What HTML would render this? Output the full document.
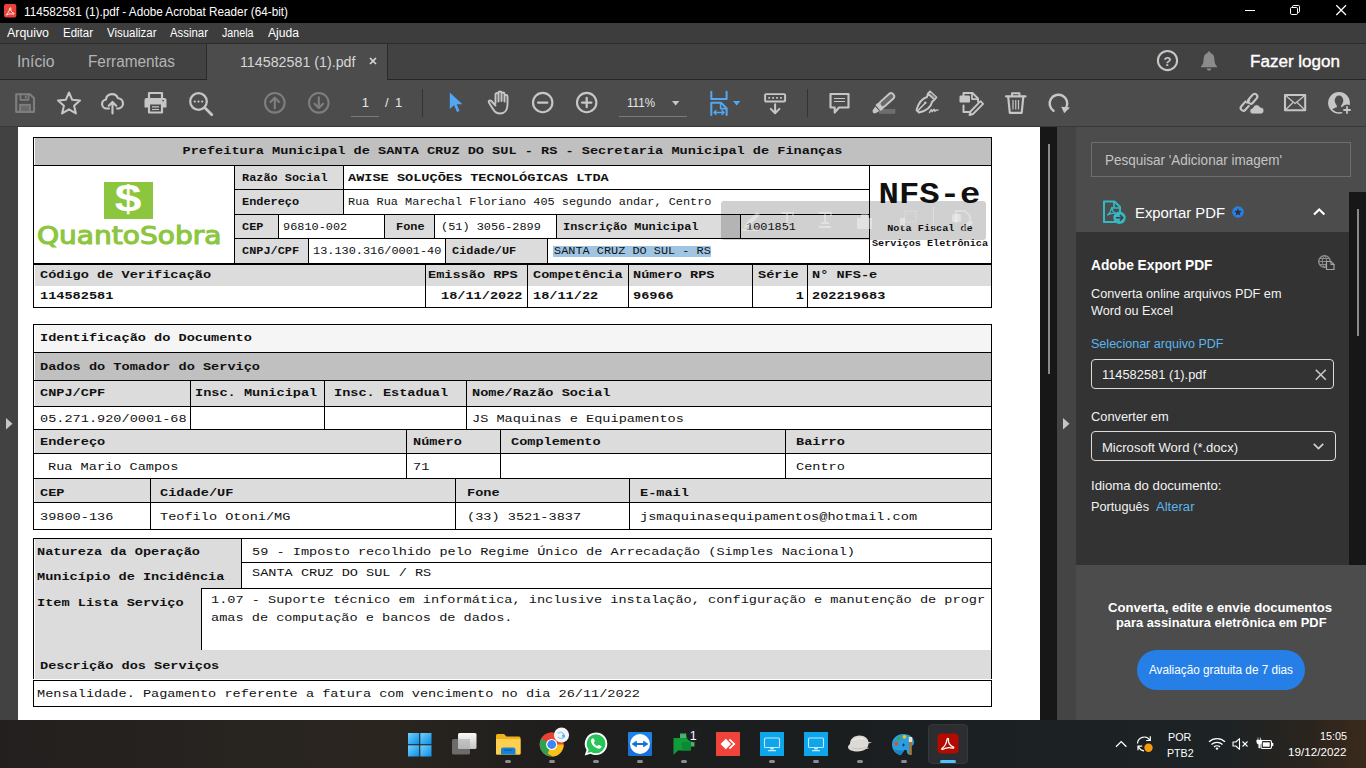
<!DOCTYPE html>
<html lang="pt-BR"><head><meta charset="utf-8"><title>114582581 (1).pdf - Adobe Acrobat Reader (64-bit)</title>
<style>
*{margin:0;padding:0;box-sizing:border-box}
html,body{width:1366px;height:768px;overflow:hidden;background:#1f1d1b}
#r{position:relative;width:1366px;height:768px;overflow:hidden;font-family:"Liberation Sans",sans-serif}
#r div,#r span,#r svg{position:absolute}
.m{font-family:"Liberation Mono",monospace;white-space:pre}
.s{font-family:"Liberation Sans",sans-serif;white-space:pre}
.d{font-family:"DejaVu Sans","Liberation Sans",sans-serif;white-space:pre}
svg{overflow:visible}
</style></head>
<body><div id="r">
<div style="left:0px;top:0px;width:1366px;height:23px;background:#000;"></div>
<div style="left:0px;top:23px;width:1366px;height:20px;background:#3d3d3d;"></div>
<div style="left:0px;top:43px;width:1366px;height:37px;background:#424242;"></div>
<div style="left:0px;top:43px;width:1366px;height:1px;background:#2b2b2b;"></div>
<div style="left:0px;top:79px;width:1366px;height:1px;background:#262626;"></div>
<div style="left:207px;top:44px;width:180px;height:36px;background:#4c4c4c;"></div>
<div style="left:206px;top:44px;width:1px;height:35px;background:#2b2b2b;"></div>
<div style="left:387px;top:44px;width:1px;height:35px;background:#2b2b2b;"></div>
<div style="left:0px;top:80px;width:1366px;height:46px;background:#4c4c4c;"></div>
<span class="s" style="top:6px;font-size:12px;line-height:12px;color:#fff;left:23.5px;transform-origin:0 10px;transform:scale(0.9779,1.0);">114582581 (1).pdf - Adobe Acrobat Reader (64-bit)</span>
<span class="s" style="top:27px;font-size:12px;line-height:12px;color:#fff;left:7px;transform-origin:0 10px;transform:scale(1.0323,1.0);">Arquivo</span>
<span class="s" style="top:27px;font-size:12px;line-height:12px;color:#fff;left:63.3px;transform-origin:0 10px;transform:scale(0.9567,1.0);">Editar</span>
<span class="s" style="top:27px;font-size:12px;line-height:12px;color:#fff;left:107px;transform-origin:0 10px;transform:scale(0.9554,1.0);">Visualizar</span>
<span class="s" style="top:27px;font-size:12px;line-height:12px;color:#fff;left:170px;transform-origin:0 10px;transform:scale(0.9496,1.0);">Assinar</span>
<span class="s" style="top:27px;font-size:12px;line-height:12px;color:#fff;left:222.3px;transform-origin:0 10px;transform:scale(0.8905,1.0);">Janela</span>
<span class="s" style="top:27px;font-size:12px;line-height:12px;color:#fff;left:268px;transform-origin:0 10px;transform:scale(1.0097,1.0);">Ajuda</span>
<span class="s" style="top:54px;font-size:16px;line-height:16px;color:#b4b4b4;left:17px;transform-origin:0 13px;transform:scale(0.9804,1.0);">Início</span>
<span class="s" style="top:54px;font-size:16px;line-height:16px;color:#b4b4b4;left:88px;transform-origin:0 13px;transform:scale(0.9592,1.0);">Ferramentas</span>
<span class="s" style="top:54px;font-size:15px;line-height:15px;color:#d6d6d6;left:239.5px;transform-origin:0 13px;transform:scale(0.9506,1.0);">114582581 (1).pdf</span>
<span class="s" style="top:54px;font-size:16px;line-height:16px;color:#fff;left:1250px;transform-origin:0 13px;transform:scale(1.0651,1.0);-webkit-text-stroke:0.35px #fff;">Fazer logon</span>
<div style="left:0px;top:126px;width:18px;height:594px;background:#424242;"></div>
<div style="left:18px;top:126px;width:1022px;height:594px;background:#fff;"></div>
<div style="left:1040px;top:126px;width:17px;height:594px;background:#171717;"></div>
<div style="left:1048px;top:144px;width:2px;height:230px;background:#8a8a8a;"></div>
<div style="left:1057px;top:126px;width:19px;height:594px;background:#444;"></div>
<div style="left:1076px;top:126px;width:290px;height:594px;background:#4c4c4c;"></div>
<div style="left:1076px;top:232px;width:273px;height:333px;background:#333;"></div>
<div style="left:1349px;top:192px;width:17px;height:373px;background:#171717;"></div>
<div style="left:1357px;top:209px;width:2px;height:127px;background:#8a8a8a;"></div>
<div style="left:0px;top:126px;width:1366px;height:1px;background:#383838;"></div>
<div style="left:35px;top:137px;width:956px;height:28px;background:#c0c0c0;"></div>
<div style="left:234px;top:165px;width:110px;height:24px;background:#dcdcdc;"></div>
<div style="left:234px;top:189px;width:110px;height:25px;background:#dcdcdc;"></div>
<div style="left:234px;top:214px;width:45px;height:24px;background:#dcdcdc;"></div>
<div style="left:234px;top:238px;width:75px;height:25px;background:#dcdcdc;"></div>
<div style="left:385px;top:214px;width:50px;height:24px;background:#dcdcdc;"></div>
<div style="left:556px;top:214px;width:185px;height:24px;background:#dcdcdc;"></div>
<div style="left:446px;top:238px;width:102px;height:25px;background:#dcdcdc;"></div>
<div style="left:35px;top:263px;width:956px;height:23px;background:#dcdcdc;"></div>
<div style="left:33px;top:137px;width:959px;height:1px;background:#000;"></div>
<div style="left:33px;top:165px;width:959px;height:1px;background:#000;"></div>
<div style="left:234px;top:189px;width:636px;height:1px;background:#000;"></div>
<div style="left:234px;top:214px;width:636px;height:1px;background:#000;"></div>
<div style="left:234px;top:238px;width:636px;height:1px;background:#000;"></div>
<div style="left:33px;top:263px;width:959px;height:2px;background:#000;"></div>
<div style="left:33px;top:307px;width:959px;height:1px;background:#000;"></div>
<div style="left:33px;top:137px;width:1px;height:171px;background:#000;"></div>
<div style="left:991px;top:137px;width:1px;height:171px;background:#000;"></div>
<div style="left:234px;top:165px;width:1px;height:98px;background:#000;"></div>
<div style="left:343px;top:165px;width:1px;height:49px;background:#000;"></div>
<div style="left:278px;top:214px;width:1px;height:24px;background:#000;"></div>
<div style="left:384px;top:214px;width:1px;height:24px;background:#000;"></div>
<div style="left:434px;top:214px;width:1px;height:24px;background:#000;"></div>
<div style="left:556px;top:214px;width:1px;height:24px;background:#000;"></div>
<div style="left:740px;top:214px;width:1px;height:24px;background:#000;"></div>
<div style="left:308px;top:238px;width:1px;height:25px;background:#000;"></div>
<div style="left:445px;top:238px;width:1px;height:25px;background:#000;"></div>
<div style="left:547px;top:238px;width:1px;height:25px;background:#000;"></div>
<div style="left:869px;top:165px;width:1px;height:98px;background:#000;"></div>
<div style="left:425px;top:263px;width:1px;height:44px;background:#000;"></div>
<div style="left:527px;top:263px;width:1px;height:44px;background:#000;"></div>
<div style="left:628px;top:263px;width:1px;height:44px;background:#000;"></div>
<div style="left:752px;top:263px;width:1px;height:44px;background:#000;"></div>
<div style="left:807px;top:263px;width:1px;height:44px;background:#000;"></div>
<span class="m" style="top:144px;font-size:13.58px;line-height:13.58px;color:#111;left:512.5px;transform-origin:50% 10px;transform:translateX(-50%) scale(1.0,0.87);font-weight:bold;">Prefeitura Municipal de SANTA CRUZ DO SUL - RS - Secretaria Municipal de Finanças</span>
<span class="m" style="top:173px;font-size:11.88px;line-height:11.88px;color:#111;left:242px;transform-origin:0 8px;transform:scale(1.0,0.87);font-weight:bold;">Razão Social</span>
<span class="m" style="top:171px;font-size:13.58px;line-height:13.58px;color:#111;left:348px;transform-origin:0 10px;transform:scale(1.0,0.87);font-weight:bold;">AWISE SOLUÇÕES TECNOLÓGICAS LTDA</span>
<span class="m" style="top:197px;font-size:11.88px;line-height:11.88px;color:#111;left:242px;transform-origin:0 8px;transform:scale(1.0,0.87);font-weight:bold;">Endereço</span>
<span class="m" style="top:197px;font-size:11.88px;line-height:11.88px;color:#111;left:348px;transform-origin:0 8px;transform:scale(1.0,0.87);">Rua Rua Marechal Floriano 405 segundo andar, Centro</span>
<span class="m" style="top:222px;font-size:11.88px;line-height:11.88px;color:#111;left:242px;transform-origin:0 8px;transform:scale(1.0,0.87);font-weight:bold;">CEP</span>
<span class="m" style="top:222px;font-size:11.88px;line-height:11.88px;color:#111;left:283px;transform-origin:0 8px;transform:scale(1.0,0.87);">96810-002</span>
<span class="m" style="top:222px;font-size:11.88px;line-height:11.88px;color:#111;left:396px;transform-origin:0 8px;transform:scale(1.0,0.87);font-weight:bold;">Fone</span>
<span class="m" style="top:222px;font-size:11.88px;line-height:11.88px;color:#111;left:441px;transform-origin:0 8px;transform:scale(1.0,0.87);">(51) 3056-2899</span>
<span class="m" style="top:222px;font-size:11.88px;line-height:11.88px;color:#111;left:563px;transform-origin:0 8px;transform:scale(1.0,0.87);font-weight:bold;">Inscrição Municipal</span>
<span class="m" style="top:222px;font-size:11.88px;line-height:11.88px;color:#111;left:746px;transform-origin:0 8px;transform:scale(1.0,0.87);">1001851</span>
<span class="m" style="top:246px;font-size:11.88px;line-height:11.88px;color:#111;left:242px;transform-origin:0 8px;transform:scale(1.0,0.87);font-weight:bold;">CNPJ/CPF</span>
<span class="m" style="top:246px;font-size:11.88px;line-height:11.88px;color:#111;left:313px;transform-origin:0 8px;transform:scale(1.0,0.87);">13.130.316/0001-40</span>
<span class="m" style="top:246px;font-size:11.88px;line-height:11.88px;color:#111;left:452px;transform-origin:0 8px;transform:scale(1.0,0.87);font-weight:bold;">Cidade/UF</span>
<div style="left:553px;top:246px;width:158px;height:11px;background:#9fc5e3;"></div>
<span class="m" style="top:246px;font-size:11.88px;line-height:11.88px;color:#111;left:554px;transform-origin:0 8px;transform:scale(1.0,0.87);">SANTA CRUZ DO SUL - RS</span>
<span class="m" style="top:178px;font-size:33.95px;line-height:33.95px;color:#111;left:929.5px;transform-origin:50% 25px;transform:translateX(-50%) scale(1.0,0.87);font-weight:bold;">NFS-e</span>
<span class="m" style="top:224px;font-size:10.19px;line-height:10.19px;color:#111;left:930px;transform-origin:50% 7px;transform:translateX(-50%) scale(1.0,0.87);font-weight:bold;">Nota Fiscal de</span>
<span class="m" style="top:239px;font-size:10.19px;line-height:10.19px;color:#111;left:930px;transform-origin:50% 7px;transform:translateX(-50%) scale(1.0,0.87);font-weight:bold;">Serviços Eletrônica</span>
<span class="m" style="top:268px;font-size:13.58px;line-height:13.58px;color:#111;left:40px;transform-origin:0 10px;transform:scale(1.0,0.87);font-weight:bold;">Código de Verificação</span>
<span class="m" style="top:268px;font-size:13.58px;line-height:13.58px;color:#111;left:428px;transform-origin:0 10px;transform:scale(1.0,0.87);font-weight:bold;">Emissão RPS</span>
<span class="m" style="top:268px;font-size:13.58px;line-height:13.58px;color:#111;left:533px;transform-origin:0 10px;transform:scale(1.0,0.87);font-weight:bold;">Competência</span>
<span class="m" style="top:268px;font-size:13.58px;line-height:13.58px;color:#111;left:633px;transform-origin:0 10px;transform:scale(1.0,0.87);font-weight:bold;">Número RPS</span>
<span class="m" style="top:268px;font-size:13.58px;line-height:13.58px;color:#111;left:758px;transform-origin:0 10px;transform:scale(1.0,0.87);font-weight:bold;">Série</span>
<span class="m" style="top:268px;font-size:13.58px;line-height:13.58px;color:#111;left:812px;transform-origin:0 10px;transform:scale(1.0,0.87);font-weight:bold;">N° NFS-e</span>
<span class="m" style="top:289px;font-size:13.58px;line-height:13.58px;color:#111;left:40px;transform-origin:0 10px;transform:scale(1.0,0.87);font-weight:bold;">114582581</span>
<span class="m" style="top:289px;font-size:13.58px;line-height:13.58px;color:#111;right:843.5px;transform-origin:100% 10px;transform:scale(1.0,0.87);font-weight:bold;">18/11/2022</span>
<span class="m" style="top:289px;font-size:13.58px;line-height:13.58px;color:#111;left:533px;transform-origin:0 10px;transform:scale(1.0,0.87);font-weight:bold;">18/11/22</span>
<span class="m" style="top:289px;font-size:13.58px;line-height:13.58px;color:#111;left:633px;transform-origin:0 10px;transform:scale(1.0,0.87);font-weight:bold;">96966</span>
<span class="m" style="top:289px;font-size:13.58px;line-height:13.58px;color:#111;right:562px;transform-origin:100% 10px;transform:scale(1.0,0.87);font-weight:bold;">1</span>
<span class="m" style="top:289px;font-size:13.58px;line-height:13.58px;color:#111;left:812px;transform-origin:0 10px;transform:scale(1.0,0.87);font-weight:bold;">202219683</span>
<div style="left:721px;top:201px;width:265px;height:39px;background:rgba(20,20,20,0.2);border-radius:3px;"></div>
<div style="left:35px;top:324px;width:956px;height:28px;background:#f5f5f5;"></div>
<div style="left:35px;top:352px;width:956px;height:28px;background:#c0c0c0;"></div>
<div style="left:35px;top:380px;width:956px;height:26px;background:#dcdcdc;"></div>
<div style="left:35px;top:429px;width:956px;height:24px;background:#dcdcdc;"></div>
<div style="left:35px;top:478px;width:956px;height:24px;background:#dcdcdc;"></div>
<div style="left:33px;top:324px;width:959px;height:1px;background:#000;"></div>
<div style="left:33px;top:352px;width:959px;height:1px;background:#000;"></div>
<div style="left:33px;top:380px;width:959px;height:1px;background:#000;"></div>
<div style="left:33px;top:406px;width:959px;height:1px;background:#000;"></div>
<div style="left:33px;top:429px;width:959px;height:1px;background:#000;"></div>
<div style="left:33px;top:453px;width:959px;height:1px;background:#000;"></div>
<div style="left:33px;top:478px;width:959px;height:1px;background:#000;"></div>
<div style="left:33px;top:502px;width:959px;height:1px;background:#000;"></div>
<div style="left:33px;top:529px;width:959px;height:1px;background:#000;"></div>
<div style="left:33px;top:324px;width:1px;height:206px;background:#000;"></div>
<div style="left:991px;top:324px;width:1px;height:206px;background:#000;"></div>
<div style="left:190px;top:380px;width:1px;height:49px;background:#000;"></div>
<div style="left:324px;top:380px;width:1px;height:49px;background:#000;"></div>
<div style="left:466px;top:380px;width:1px;height:49px;background:#000;"></div>
<div style="left:406px;top:429px;width:1px;height:49px;background:#000;"></div>
<div style="left:500px;top:429px;width:1px;height:49px;background:#000;"></div>
<div style="left:785px;top:429px;width:1px;height:49px;background:#000;"></div>
<div style="left:150px;top:478px;width:1px;height:51px;background:#000;"></div>
<div style="left:455px;top:478px;width:1px;height:51px;background:#000;"></div>
<div style="left:629px;top:478px;width:1px;height:51px;background:#000;"></div>
<span class="m" style="top:331px;font-size:13.58px;line-height:13.58px;color:#111;left:40px;transform-origin:0 10px;transform:scale(1.0,0.87);font-weight:bold;">Identificação do Documento</span>
<span class="m" style="top:360px;font-size:13.58px;line-height:13.58px;color:#111;left:40px;transform-origin:0 10px;transform:scale(1.0,0.87);font-weight:bold;">Dados do Tomador do Serviço</span>
<span class="m" style="top:386px;font-size:13.58px;line-height:13.58px;color:#111;left:40px;transform-origin:0 10px;transform:scale(1.0,0.87);font-weight:bold;">CNPJ/CPF</span>
<span class="m" style="top:386px;font-size:13.58px;line-height:13.58px;color:#111;left:195px;transform-origin:0 10px;transform:scale(1.0,0.87);font-weight:bold;">Insc. Municipal</span>
<span class="m" style="top:386px;font-size:13.58px;line-height:13.58px;color:#111;left:334px;transform-origin:0 10px;transform:scale(1.0,0.87);font-weight:bold;">Insc. Estadual</span>
<span class="m" style="top:386px;font-size:13.58px;line-height:13.58px;color:#111;left:472px;transform-origin:0 10px;transform:scale(1.0,0.87);font-weight:bold;">Nome/Razão Social</span>
<span class="m" style="top:412px;font-size:13.58px;line-height:13.58px;color:#111;left:40px;transform-origin:0 10px;transform:scale(1.0,0.87);">05.271.920/0001-68</span>
<span class="m" style="top:412px;font-size:13.58px;line-height:13.58px;color:#111;left:472px;transform-origin:0 10px;transform:scale(1.0,0.87);">JS Maquinas e Equipamentos</span>
<span class="m" style="top:435px;font-size:13.58px;line-height:13.58px;color:#111;left:40px;transform-origin:0 10px;transform:scale(1.0,0.87);font-weight:bold;">Endereço</span>
<span class="m" style="top:435px;font-size:13.58px;line-height:13.58px;color:#111;left:413px;transform-origin:0 10px;transform:scale(1.0,0.87);font-weight:bold;">Número</span>
<span class="m" style="top:435px;font-size:13.58px;line-height:13.58px;color:#111;left:511px;transform-origin:0 10px;transform:scale(1.0,0.87);font-weight:bold;">Complemento</span>
<span class="m" style="top:435px;font-size:13.58px;line-height:13.58px;color:#111;left:796px;transform-origin:0 10px;transform:scale(1.0,0.87);font-weight:bold;">Bairro</span>
<span class="m" style="top:460px;font-size:13.58px;line-height:13.58px;color:#111;left:48px;transform-origin:0 10px;transform:scale(1.0,0.87);">Rua Mario Campos</span>
<span class="m" style="top:460px;font-size:13.58px;line-height:13.58px;color:#111;left:413px;transform-origin:0 10px;transform:scale(1.0,0.87);">71</span>
<span class="m" style="top:460px;font-size:13.58px;line-height:13.58px;color:#111;left:796px;transform-origin:0 10px;transform:scale(1.0,0.87);">Centro</span>
<span class="m" style="top:486px;font-size:13.58px;line-height:13.58px;color:#111;left:40px;transform-origin:0 10px;transform:scale(1.0,0.87);font-weight:bold;">CEP</span>
<span class="m" style="top:486px;font-size:13.58px;line-height:13.58px;color:#111;left:160px;transform-origin:0 10px;transform:scale(1.0,0.87);font-weight:bold;">Cidade/UF</span>
<span class="m" style="top:486px;font-size:13.58px;line-height:13.58px;color:#111;left:467px;transform-origin:0 10px;transform:scale(1.0,0.87);font-weight:bold;">Fone</span>
<span class="m" style="top:486px;font-size:13.58px;line-height:13.58px;color:#111;left:640px;transform-origin:0 10px;transform:scale(1.0,0.87);font-weight:bold;">E-mail</span>
<span class="m" style="top:510px;font-size:13.58px;line-height:13.58px;color:#111;left:40px;transform-origin:0 10px;transform:scale(1.0,0.87);">39800-136</span>
<span class="m" style="top:510px;font-size:13.58px;line-height:13.58px;color:#111;left:160px;transform-origin:0 10px;transform:scale(1.0,0.87);">Teofilo Otoni/MG</span>
<span class="m" style="top:510px;font-size:13.58px;line-height:13.58px;color:#111;left:467px;transform-origin:0 10px;transform:scale(1.0,0.87);">(33) 3521-3837</span>
<span class="m" style="top:510px;font-size:13.58px;line-height:13.58px;color:#111;left:640px;transform-origin:0 10px;transform:scale(1.0,0.87);">jsmaquinasequipamentos@hotmail.com</span>
<div style="left:35px;top:539px;width:956px;height:140px;background:#dcdcdc;"></div>
<div style="left:242px;top:539px;width:749px;height:49px;background:#fff;"></div>
<div style="left:202px;top:588px;width:789px;height:62px;background:#fff;"></div>
<div style="left:33px;top:538px;width:959px;height:1px;background:#000;"></div>
<div style="left:241px;top:562px;width:751px;height:1px;background:#000;"></div>
<div style="left:201px;top:588px;width:791px;height:1px;background:#000;"></div>
<div style="left:33px;top:538px;width:1px;height:141px;background:#000;"></div>
<div style="left:991px;top:538px;width:1px;height:141px;background:#000;"></div>
<div style="left:241px;top:538px;width:1px;height:51px;background:#000;"></div>
<div style="left:201px;top:588px;width:1px;height:62px;background:#000;"></div>
<span class="m" style="top:545px;font-size:13.58px;line-height:13.58px;color:#111;left:37px;transform-origin:0 10px;transform:scale(1.0,0.87);font-weight:bold;">Natureza da Operação</span>
<span class="m" style="top:545px;font-size:13.58px;line-height:13.58px;color:#111;left:252px;transform-origin:0 10px;transform:scale(1.0,0.87);">59 - Imposto recolhido pelo Regime Único de Arrecadação (Simples Nacional)</span>
<span class="m" style="top:570px;font-size:13.58px;line-height:13.58px;color:#111;left:37px;transform-origin:0 10px;transform:scale(1.0,0.87);font-weight:bold;">Município de Incidência</span>
<span class="m" style="top:566px;font-size:13.58px;line-height:13.58px;color:#111;left:252px;transform-origin:0 10px;transform:scale(1.0,0.87);">SANTA CRUZ DO SUL / RS</span>
<span class="m" style="top:596px;font-size:13.58px;line-height:13.58px;color:#111;left:37px;transform-origin:0 10px;transform:scale(1.0,0.87);font-weight:bold;">Item Lista Serviço</span>
<span class="m" style="top:593px;font-size:13.58px;line-height:13.58px;color:#111;left:211px;transform-origin:0 10px;transform:scale(1.0,0.87);">1.07 - Suporte técnico em informática, inclusive instalação, configuração e manutenção de progr</span>
<span class="m" style="top:611px;font-size:13.58px;line-height:13.58px;color:#111;left:211px;transform-origin:0 10px;transform:scale(1.0,0.87);">amas de computação e bancos de dados.</span>
<span class="m" style="top:659px;font-size:13.58px;line-height:13.58px;color:#111;left:40px;transform-origin:0 10px;transform:scale(1.0,0.87);font-weight:bold;">Descrição dos Serviços</span>
<div style="left:33px;top:680px;width:959px;height:1px;background:#000;"></div>
<div style="left:33px;top:706px;width:959px;height:1px;background:#000;"></div>
<div style="left:33px;top:680px;width:1px;height:27px;background:#000;"></div>
<div style="left:991px;top:680px;width:1px;height:27px;background:#000;"></div>
<span class="m" style="top:687px;font-size:13.58px;line-height:13.58px;color:#111;left:37px;transform-origin:0 10px;transform:scale(1.0,0.87);">Mensalidade. Pagamento referente a fatura com vencimento no dia 26/11/2022</span>
<div style="left:1091px;top:142px;width:260px;height:35px;background:transparent;border:1px solid #6e6e6e;"></div>
<span class="s" style="top:153px;font-size:14px;line-height:14px;color:#c4c4c4;left:1105px;transform-origin:0 12px;transform:scale(0.9643,1.0);">Pesquisar &#x27;Adicionar imagem&#x27;</span>
<span class="s" style="top:205px;font-size:15.5px;line-height:15.5px;color:#fff;left:1135px;transform-origin:0 13px;transform:scale(0.9586,1.0);">Exportar PDF</span>
<span class="s" style="top:258px;font-size:14px;line-height:14px;color:#fff;left:1091px;transform-origin:0 12px;transform:scale(0.9824,1.0);font-weight:bold;">Adobe Export PDF</span>
<span class="s" style="top:288px;font-size:12.5px;line-height:12.5px;color:#f2f2f2;left:1091px;transform-origin:0 10px;transform:scale(1.0155,1.0);">Converta online arquivos PDF em</span>
<span class="s" style="top:305px;font-size:12.5px;line-height:12.5px;color:#f2f2f2;left:1091px;transform-origin:0 10px;transform:scale(1.0116,1.0);">Word ou Excel</span>
<span class="s" style="top:338px;font-size:12.5px;line-height:12.5px;color:#5cb5ec;left:1091px;transform-origin:0 10px;transform:scale(1.0037,1.0);">Selecionar arquivo PDF</span>
<div style="left:1091px;top:359px;width:243px;height:30px;background:transparent;border:1px solid #dcdcdc;border-radius:4px;"></div>
<span class="s" style="top:369px;font-size:12.5px;line-height:12.5px;color:#f2f2f2;left:1101.5px;transform-origin:0 10px;transform:scale(1.0272,1.0);">114582581 (1).pdf</span>
<span class="s" style="top:411px;font-size:12.5px;line-height:12.5px;color:#f2f2f2;left:1091px;transform-origin:0 10px;transform:scale(1.026,1.0);">Converter em</span>
<div style="left:1091px;top:431px;width:245px;height:30px;background:transparent;border:1px solid #dcdcdc;border-radius:4px;"></div>
<span class="s" style="top:442px;font-size:12.5px;line-height:12.5px;color:#f2f2f2;left:1101.5px;transform-origin:0 10px;transform:scale(1.0433,1.0);">Microsoft Word (*.docx)</span>
<span class="s" style="top:480px;font-size:12.5px;line-height:12.5px;color:#f2f2f2;left:1091px;transform-origin:0 10px;transform:scale(1.0549,1.0);">Idioma do documento:</span>
<span class="s" style="top:501px;font-size:12.5px;line-height:12.5px;color:#f2f2f2;left:1091px;transform-origin:0 10px;transform:scale(1.0178,1.0);">Português</span>
<span class="s" style="top:501px;font-size:12.5px;line-height:12.5px;color:#5cb5ec;left:1156px;transform-origin:0 10px;transform:scale(1.0454,1.0);">Alterar</span>
<span class="s" style="top:601px;font-size:13px;line-height:13px;color:#fff;left:1107.5px;transform-origin:0 11px;transform:scale(1.0067,1.0);font-weight:bold;">Converta, edite e envie documentos</span>
<span class="s" style="top:616px;font-size:13px;line-height:13px;color:#fff;left:1116px;transform-origin:0 11px;transform:scale(0.9875,1.0);font-weight:bold;">para assinatura eletrônica em PDF</span>
<div style="left:1137px;top:650px;width:168px;height:40px;background:#257fe7;border-radius:20px;"></div>
<span class="s" style="top:664px;font-size:12.5px;line-height:12.5px;color:#fff;left:1149.3px;transform-origin:0 10px;transform:scale(0.939,1.0);">Avaliação gratuita de 7 dias</span>
<div style="left:0px;top:720px;width:1366px;height:48px;background:linear-gradient(90deg,#231f1e 0%,#282420 18%,#2a251f 28%,#1f1e1d 40%,#1b1d1e 55%,#1b2022 72%,#1d2324 90%,#2b241e 96%,#3a2a1c 100%);"></div>
<span class="s" style="top:732px;font-size:11.5px;line-height:11.5px;color:#fff;left:1168px;transform-origin:0 9px;transform:scale(0.9349,1.0);">POR</span>
<span class="s" style="top:748px;font-size:11.5px;line-height:11.5px;color:#fff;left:1166.6px;transform-origin:0 9px;transform:scale(0.9247,1.0);">PTB2</span>
<span class="s" style="top:731px;font-size:11.5px;line-height:11.5px;color:#fff;left:1319.7px;transform-origin:0 9px;transform:scale(0.9381,1.0);">15:05</span>
<span class="s" style="top:747px;font-size:11.5px;line-height:11.5px;color:#fff;left:1288.3px;transform-origin:0 9px;transform:scale(1.0145,1.0);">19/12/2022</span>
<svg style="left:4px;top:4px;" width="12" height="14" viewBox="0 0 12 14"><rect x="0" y="0" width="12.3" height="13.5" rx="2" fill="#e8423a"/><path d="M2.600 10.300c1.400-1.100 2.700-3.400 3.200-5.900.2-1.100 1.200-.9 1 .2-.4 1.800.9 4.100 2.900 4.600.9.300.5 1.200-.4.900-2-.5-4.500-.4-6.300.8-.7.400-1.100-.2-.4-.6z" fill="none" stroke="#fff" stroke-width="0.9"/></svg>
<div style="left:1245px;top:10px;width:10px;height:1px;background:#fff;"></div>
<svg style="left:1290px;top:5px;" width="10" height="10" viewBox="0 0 10 10"><rect x="0.500" y="2.500" width="7" height="7" rx="1.200" fill="none" stroke="#fff" stroke-width="1"/><path d="M2.500 2.300v-.6a1.200 1.200 0 0 1 1.200-1.200h4.600a1.200 1.200 0 0 1 1.200 1.200v4.600a1.200 1.200 0 0 1-1.200 1.200h-.6" fill="none" stroke="#fff" stroke-width="1"/></svg>
<svg style="left:1336px;top:5px;" width="10" height="10" viewBox="0 0 10 10"><path d="M0.300 0.300l9.700 9.700M10 0.300l-9.700 9.700" stroke="#fff" stroke-width="1.250" fill="none"/></svg>
<svg style="left:369px;top:57px;" width="8" height="8" viewBox="0 0 8 8"><path d="M1 1l6 6M7 1l-6 6" stroke="#d6d6d6" stroke-width="1.700" fill="none"/></svg>
<svg style="left:1157px;top:50px;" width="22" height="22" viewBox="0 0 22 22"><circle cx="10.500" cy="10.500" r="9.600" fill="none" stroke="#c6c6c6" stroke-width="2.05" stroke-linejoin="round" stroke-linecap="round"/></svg>
<span class="s" style="top:55px;font-size:13px;line-height:13px;color:#c6c6c6;left:1167.6px;transform:translateX(-50%);font-weight:bold;">?</span>
<svg style="left:1200px;top:51px;" width="18" height="21" viewBox="0 0 18 21"><path d="M9 0.500c1 0 1.500.7 1.500 1.600 2.800.9 3.900 3.200 3.900 6.300 0 3.600 1.200 5.400 2.600 6.800v1h-16v-1c1.400-1.400 2.600-3.200 2.600-6.800 0-3.100 1.100-5.400 3.900-6.300 0-.9.500-1.600 1.500-1.600zM6.800 17.600h4.400c0 1.300-1 2.200-2.200 2.200s-2.200-.9-2.200-2.200z" fill="#8c8c8c"/></svg>
<svg style="left:15px;top:93px;" width="21" height="21" viewBox="0 0 21 21"><path d="M1.200 1.200h13.800l4 4v13.600h-17.800z" fill="none" stroke="#7e7e7e" stroke-width="2.15" stroke-linejoin="round" stroke-linecap="round"/><path d="M5.500 1.200v5.600h8v-5.600" fill="none" stroke="#7e7e7e" stroke-width="1.85" stroke-linejoin="round" stroke-linecap="round"/><rect x="9.800" y="2.500" width="1.800" height="3" fill="#7e7e7e"/><rect x="5" y="11.800" width="10" height="7" fill="#6a6a6a" stroke="#7e7e7e" stroke-width="1.800"/></svg>
<svg style="left:57px;top:91px;" width="24" height="24" viewBox="0 0 24 24"><path d="M12 1.500l3.200 7.300 7.800.7-5.900 5.200 1.800 7.700-6.900-4.100-6.900 4.100 1.800-7.700-5.900-5.200 7.800-.7z" fill="none" stroke="#c6c6c6" stroke-width="2.05" stroke-linejoin="round" stroke-linecap="round" stroke-linejoin="miter"/></svg>
<svg style="left:101px;top:93px;" width="24" height="22" viewBox="0 0 24 22"><path d="M8 15.500h-2.500a4.500 4.500 0 0 1-.6-8.950 6.200 6.200 0 0 1 12-1.300 5.200 5.200 0 0 1 1.100 10.250h-2" fill="none" stroke="#c6c6c6" stroke-width="2.15" stroke-linejoin="round" stroke-linecap="round"/><path d="M11.500 20.500v-11M7.800 12.800l3.700-3.800 3.700 3.800" fill="none" stroke="#c6c6c6" stroke-width="2.15" stroke-linejoin="round" stroke-linecap="round"/></svg>
<svg style="left:144px;top:92px;" width="23" height="22" viewBox="0 0 23 22"><rect x="5" y="1" width="13" height="6" fill="none" stroke="#c6c6c6" stroke-width="2.15" stroke-linejoin="round" stroke-linecap="round"/><path d="M2.500 6h18a2 2 0 0 1 2 2v7.500h-4.500v-4h-13v4h-4.500v-7.500a2 2 0 0 1 2-2z" fill="#c6c6c6"/><rect x="5" y="11.500" width="13" height="9" fill="none" stroke="#c6c6c6" stroke-width="2.15" stroke-linejoin="round" stroke-linecap="round"/><path d="M8 14.800h7M8 17.500h7" stroke="#c6c6c6" stroke-width="1.200"/><rect x="18.300" y="8" width="1.600" height="1.300" fill="#4c4c4c"/></svg>
<svg style="left:189px;top:92px;" width="24" height="24" viewBox="0 0 24 24"><circle cx="9.500" cy="9.500" r="8.300" fill="none" stroke="#c6c6c6" stroke-width="2.25" stroke-linejoin="round" stroke-linecap="round"/><path d="M15.800 15.800l7 7" fill="none" stroke="#c6c6c6" stroke-width="2.75" stroke-linejoin="round" stroke-linecap="round"/><circle cx="5.800" cy="9.600" r="1.100" fill="#c6c6c6"/><circle cx="9.500" cy="9.600" r="1.100" fill="#c6c6c6"/><circle cx="13.200" cy="9.600" r="1.100" fill="#c6c6c6"/></svg>
<svg style="left:264px;top:92px;" width="22" height="22" viewBox="0 0 22 22"><circle cx="10.800" cy="10.800" r="9.800" fill="none" stroke="#7e7e7e" stroke-width="2.05" stroke-linejoin="round" stroke-linecap="round"/><path d="M10.800 16.500v-10.500M6.500 10l4.300-4.300 4.300 4.300" fill="none" stroke="#7e7e7e" stroke-width="2.15" stroke-linejoin="round" stroke-linecap="round"/></svg>
<svg style="left:308px;top:92px;" width="22" height="22" viewBox="0 0 22 22"><circle cx="10.800" cy="10.800" r="9.800" fill="none" stroke="#7e7e7e" stroke-width="2.05" stroke-linejoin="round" stroke-linecap="round"/><path d="M10.800 5.200v10.500M6.500 11.700l4.300 4.300 4.300-4.300" fill="none" stroke="#7e7e7e" stroke-width="2.15" stroke-linejoin="round" stroke-linecap="round"/></svg>
<span class="s" style="top:96px;font-size:13px;line-height:13px;color:#e6e6e6;left:365.3px;transform:translateX(-50%);">1</span>
<span class="s" style="top:96px;font-size:13px;line-height:13px;color:#e6e6e6;left:385px;">/</span>
<span class="s" style="top:96px;font-size:13px;line-height:13px;color:#e6e6e6;left:398.7px;transform:translateX(-50%);">1</span>
<div style="left:351px;top:116px;width:28px;height:1px;background:#7a7a7a;"></div>
<div style="left:422px;top:89px;width:1px;height:28px;background:#333;"></div>
<svg style="left:449px;top:92px;" width="14" height="21" viewBox="0 0 14 21"><path d="M0.800 0.500v16.500l4.300-3.800 2.900 6.800 2.600-1.100-2.900-6.700h5.700z" fill="#52a7f2"/></svg>
<svg style="left:487px;top:91px;" width="24" height="24" viewBox="0 0 24 24"><path d="M8.500 12v-8.500a1.500 1.500 0 0 1 3 0v7m0-.5v-8a1.500 1.500 0 0 1 3 0v8m0 0v-7a1.500 1.500 0 0 1 3 0v7.500m0-.5v-4.500a1.500 1.500 0 0 1 3 0v8c0 5.500-3 9-7.500 9-3.500 0-5.300-1.500-7.200-4.800l-3.900-6.200c-.9-1.600 1.200-2.800 2.400-1.500l4.200 4.500" fill="none" stroke="#c6c6c6" stroke-width="1.95" stroke-linejoin="round" stroke-linecap="round"/></svg>
<svg style="left:532px;top:92px;" width="22" height="22" viewBox="0 0 22 22"><circle cx="10.700" cy="10.500" r="9.700" fill="none" stroke="#c6c6c6" stroke-width="2.15" stroke-linejoin="round" stroke-linecap="round"/><path d="M6 10.500h9.400" fill="none" stroke="#c6c6c6" stroke-width="2.25" stroke-linejoin="round" stroke-linecap="round"/></svg>
<svg style="left:576px;top:92px;" width="22" height="22" viewBox="0 0 22 22"><circle cx="10.700" cy="10.500" r="9.700" fill="none" stroke="#c6c6c6" stroke-width="2.15" stroke-linejoin="round" stroke-linecap="round"/><path d="M6 10.500h9.400M10.700 5.800v9.400" fill="none" stroke="#c6c6c6" stroke-width="2.25" stroke-linejoin="round" stroke-linecap="round"/></svg>
<span class="s" style="top:96px;font-size:13px;line-height:13px;color:#e6e6e6;left:627.3px;transform-origin:0 11px;transform:scale(0.8938,1.0);">111%</span>
<div style="left:619px;top:116px;width:68px;height:1px;background:#7a7a7a;"></div>
<svg style="left:672px;top:101px;" width="8" height="5" viewBox="0 0 8 5"><path d="M0 0h7.400l-3.700 4.400z" fill="#c6c6c6"/></svg>
<svg style="left:709.5px;top:90.5px;" width="19" height="26" viewBox="0 0 19 26"><path d="M1.300 0.800v7.200h15.300v-7.200" fill="none" stroke="#52a7f2" stroke-width="2.05" stroke-linejoin="round" stroke-linecap="round" stroke-linecap="butt" stroke-linejoin="miter"/><path d="M1.300 23.900v-12.200h9.700l5.600 5.600v6.600" fill="none" stroke="#52a7f2" stroke-width="2.05" stroke-linejoin="round" stroke-linecap="round" stroke-linecap="butt" stroke-linejoin="miter"/><path d="M10.600 12v5.600h5.600" fill="none" stroke="#52a7f2" stroke-width="1.55" stroke-linejoin="round" stroke-linecap="round"/><path d="M4 21.500h10M6 19.500l-2.100 2 2.100 2M12 19.500l2.100 2-2.100 2" fill="none" stroke="#52a7f2" stroke-width="1.35" stroke-linejoin="round" stroke-linecap="round"/></svg>
<svg style="left:733px;top:101px;" width="8" height="5" viewBox="0 0 8 5"><path d="M0 0h7.400l-3.700 4.400z" fill="#52a7f2"/></svg>
<svg style="left:764px;top:93px;" width="23" height="22" viewBox="0 0 23 22"><rect x="1.100" y="1.100" width="20" height="7.400" rx="1" fill="none" stroke="#c6c6c6" stroke-width="1.95" stroke-linejoin="round" stroke-linecap="round"/><path d="M4.300 4.800h1.800M8.200 4.800h1.800M12.100 4.800h1.800M16 4.800h1.800" stroke="#c6c6c6" stroke-width="1.700"/><path d="M11.100 11.300v8.700M6.800 15.900l4.300 4.300 4.300-4.300" fill="none" stroke="#c6c6c6" stroke-width="2.05" stroke-linejoin="round" stroke-linecap="round"/></svg>
<div style="left:807px;top:89px;width:1px;height:28px;background:#333;"></div>
<svg style="left:829px;top:93px;" width="22" height="22" viewBox="0 0 22 22"><path d="M1.500 1h18v13.500h-9.500l-4.300 5v-5h-4.200z" fill="none" stroke="#c6c6c6" stroke-width="2.15" stroke-linejoin="round" stroke-linecap="round"/><path d="M5 5.500h11M5 8.500h11" stroke="#c6c6c6" stroke-width="1"/></svg>
<svg style="left:872px;top:92px;" width="24" height="22" viewBox="0 0 24 22"><rect x="7" y="17" width="16.300" height="4.800" fill="#6e6e6e"/><g transform="translate(11.500,11.200) rotate(48)"><rect x="-3.100" y="-13.300" width="6.200" height="17.500" rx="3.100" fill="#6a6a6a" stroke="#c6c6c6" stroke-width="1.900"/><rect x="-4" y="3.300" width="8" height="4" fill="#c6c6c6"/><path d="M-3 8.300h6l-1 4.700-2 1.200-2-1.200z" fill="#c6c6c6"/></g></svg>
<svg style="left:915px;top:91px;" width="25" height="23" viewBox="0 0 25 23"><path d="M13 2.500l6.500 6-2.500 2.500c-1 5-4 8.500-13 10.500l-2.500-2.500c2-7 5.500-11.500 10.500-13z" fill="none" stroke="#c6c6c6" stroke-width="1.95" stroke-linejoin="round" stroke-linecap="round"/><path d="M13.500 2l1.500-1.700 6.500 6.200-1.800 1.800" fill="none" stroke="#c6c6c6" stroke-width="1.75" stroke-linejoin="round" stroke-linecap="round"/><path d="M16 1.500l5 4.800-2.700.7z" fill="#8a8a8a"/><path d="M2.500 20l7.500-7.800" fill="none" stroke="#c6c6c6" stroke-width="1.65" stroke-linejoin="round" stroke-linecap="round"/><circle cx="10.300" cy="11.800" r="1.300" fill="#c6c6c6"/><path d="M14.500 21.500c1-2 1.800-3.500 2.300-2.500s-.5 2.500.7 1.200 1.500-2.500 2-1.500-.2 2 .8 1.200 1.500-1.500 2.700-.8" fill="none" stroke="#c6c6c6" stroke-width="1.45" stroke-linejoin="round" stroke-linecap="round"/></svg>
<svg style="left:959px;top:92px;" width="25" height="24" viewBox="0 0 25 24"><path d="M4.500 4v-3h9l5.500 5.500v3" fill="none" stroke="#c6c6c6" stroke-width="1.95" stroke-linejoin="round" stroke-linecap="round"/><path d="M13 1.200v5.800h5.800" fill="none" stroke="#c6c6c6" stroke-width="1.75" stroke-linejoin="round" stroke-linecap="round"/><rect x="0.500" y="3.500" width="10.500" height="7" rx="1.200" fill="#c6c6c6"/><path d="M4.500 13.500v6.500h6" fill="none" stroke="#c6c6c6" stroke-width="1.95" stroke-linejoin="round" stroke-linecap="round"/><path d="M11.500 19.500l10-10.300 2.600 2.600-10.100 10.200-3.500 1z" fill="none" stroke="#c6c6c6" stroke-width="1.85" stroke-linejoin="round" stroke-linecap="round"/><path d="M11.300 20l2.400 2.300-3.400 1.100z" fill="#c6c6c6"/></svg>
<svg style="left:1005px;top:92px;" width="22" height="22" viewBox="0 0 22 22"><path d="M1 4.300h19.500" fill="none" stroke="#c6c6c6" stroke-width="2.25" stroke-linejoin="round" stroke-linecap="round"/><path d="M7 4v-2.800h7.500v2.800" fill="none" stroke="#c6c6c6" stroke-width="1.95" stroke-linejoin="round" stroke-linecap="round"/><path d="M3.200 4.800l1.600 16h11.900l1.600-16" fill="none" stroke="#c6c6c6" stroke-width="2.15" stroke-linejoin="round" stroke-linecap="round"/><path d="M8 8v9.500M10.750 8v9.500M13.500 8v9.500" stroke="#c6c6c6" stroke-width="1.200"/></svg>
<svg style="left:1048px;top:93px;" width="24" height="21" viewBox="0 0 24 21"><path d="M5.500 17.800a8.800 8.800 0 1 1 12.800-3.300" fill="none" stroke="#c6c6c6" stroke-width="2.45" stroke-linejoin="round" stroke-linecap="round"/><path d="M13.200 13.800l8.800.7-5.800 5.800z" fill="#c6c6c6"/></svg>
<svg style="left:1238px;top:92px;" width="26" height="22" viewBox="0 0 26 22"><rect x="-2.700" y="-5.600" width="5.400" height="11.200" rx="2.700" transform="translate(7.300,13.800) rotate(41)" fill="none" stroke="#c6c6c6" stroke-width="2.1" stroke-linejoin="round" stroke-linecap="round"/><rect x="-2.700" y="-5.600" width="5.400" height="11.200" rx="2.700" transform="translate(14.700,6.800) rotate(41)" fill="none" stroke="#4c4c4c" stroke-width="4.200"/><rect x="-2.700" y="-5.600" width="5.400" height="11.200" rx="2.700" transform="translate(14.700,6.800) rotate(41)" fill="none" stroke="#c6c6c6" stroke-width="2.1" stroke-linejoin="round" stroke-linecap="round"/><path d="M8.300 11.200l3.300-3.700" stroke="#c6c6c6" stroke-width="2.100" fill="none"/><path d="M15 22a3 3 0 0 1-.3-6 4 4 0 0 1 7.600-.8 3.400 3.400 0 0 1 .5 6.800z" fill="#c6c6c6" stroke="#4c4c4c" stroke-width="0.800"/></svg>
<svg style="left:1284px;top:94px;" width="22" height="17" viewBox="0 0 22 17"><rect x="1" y="1" width="20.200" height="15.200" fill="none" stroke="#c6c6c6" stroke-width="2.05" stroke-linejoin="round" stroke-linecap="round" stroke-linejoin="miter"/><path d="M1.500 1.500l9.600 8 9.600-8M1.500 15.800l7-6.800M20.700 15.800l-7-6.800" fill="none" stroke="#c6c6c6" stroke-width="1.25" stroke-linejoin="round" stroke-linecap="round"/></svg>
<svg style="left:1328px;top:92px;" width="24" height="23" viewBox="0 0 24 23"><defs><clipPath id="pc"><circle cx="11" cy="10.900" r="9.300"/></clipPath></defs><circle cx="11" cy="10.900" r="10.900" fill="#c6c6c6"/><g clip-path="url(#pc)" fill="#4c4c4c"><ellipse cx="11" cy="8.600" rx="4.300" ry="5.100"/><rect x="8.800" y="12" width="4.400" height="4"/><ellipse cx="11" cy="21.500" rx="8.800" ry="6.500"/></g><circle cx="19" cy="18" r="5.600" fill="#4c4c4c"/><path d="M19 14.300v7.400M15.300 18h7.400" stroke="#c6c6c6" stroke-width="1.800"/></svg>
<svg style="left:5.5px;top:417.7px;" width="7" height="12" viewBox="0 0 7 12"><path d="M0 0l6.500 5.700-6.500 5.700z" fill="#c6c6c6"/></svg>
<svg style="left:1062.8px;top:417.7px;" width="7" height="12" viewBox="0 0 7 12"><path d="M0 0l6.500 5.700-6.500 5.700z" fill="#c6c6c6"/></svg>
<div style="left:104px;top:182px;width:49px;height:37px;background:#8cc63f;"></div>
<span class="s" style="top:180px;font-size:37.5px;line-height:37.5px;color:#fff;left:128.3px;transform-origin:50% 31px;transform:translateX(-50%) scale(1.28,1.0);font-weight:bold;">$</span>
<span class="d" style="top:224px;font-size:24px;line-height:24px;color:#8cc63f;left:36.8px;transform-origin:0 20px;transform:scale(1.1689,1.0);-webkit-text-stroke:1.1px #8cc63f;">QuantoSobra</span>
<svg style="left:1102px;top:200px;" width="25" height="25" viewBox="0 0 25 25"><path d="M13 22h-11v-20.500h10.500l5.500 5.500v5" fill="none" stroke="#35b8c4" stroke-width="2.05" stroke-linejoin="round" stroke-linecap="round"/><path d="M12 2v6h6" fill="none" stroke="#35b8c4" stroke-width="1.65" stroke-linejoin="round" stroke-linecap="round"/><path d="M5.500 15c2-1.500 3.500-4 4-7 .2-1 1.200-.8 1 .2-.3 2 1 4.300 3.200 5-2.500-.300-5.500.300-8.200 1.800z" fill="none" stroke="#35b8c4" stroke-width="1.35" stroke-linejoin="round" stroke-linecap="round"/><circle cx="17.500" cy="17.800" r="6.200" fill="#35b8c4"/><path d="M14 17.800h6.500M18 15l2.800 2.800-2.800 2.800" fill="none" stroke="#3f3f3f" stroke-width="1.500"/></svg>
<svg style="left:1232px;top:206px;" width="12" height="12" viewBox="0 0 12 12"><circle cx="6" cy="6" r="5.800" fill="#2680eb"/><path d="M6 2.300l1.100 2.500 2.700.3-2 1.800.6 2.700-2.400-1.400-2.400 1.400.6-2.700-2-1.800 2.700-.3z" fill="#333"/></svg>
<svg style="left:1313px;top:208px;" width="13" height="8" viewBox="0 0 13 8"><path d="M1 6.600l5.200-5.200 5.200 5.200" fill="none" stroke="#fff" stroke-width="2.100"/></svg>
<svg style="left:1318px;top:255px;" width="17" height="15" viewBox="0 0 17 15"><circle cx="6.500" cy="6.500" r="5.800" fill="none" stroke="#8e8e8e" stroke-width="1.35" stroke-linejoin="round" stroke-linecap="round"/><path d="M0.700 6.500h11.600M6.500 0.700c-3 3-3 8.600 0 11.600M6.500 0.700c3 3 3 8.600 0 11.600M1.800 3.500h9.400M1.800 9.500h9.400" fill="none" stroke="#8e8e8e" stroke-width="0.95" stroke-linejoin="round" stroke-linecap="round"/><path d="M8.500 6.500h4.500l3 3v5h-7.500z" fill="#333" stroke="#a4a4a4" stroke-width="1.200"/><path d="M13 6.500v3h3" fill="none" stroke="#a4a4a4" stroke-width="1.05" stroke-linejoin="round" stroke-linecap="round"/></svg>
<svg style="left:1315px;top:369px;" width="12" height="12" viewBox="0 0 12 12"><path d="M0.800 0.800l10 10M10.800 0.800l-10 10" stroke="#c8c8c8" stroke-width="1.600" fill="none"/></svg>
<svg style="left:1313px;top:443px;" width="11" height="7" viewBox="0 0 11 7"><path d="M0.800 0.800l4.700 4.700 4.700-4.700" fill="none" stroke="#d0d0d0" stroke-width="1.700"/></svg>
<svg style="left:742px;top:208px;" width="20" height="24" viewBox="0 0 20 24"><path d="M2 20l2-5 11-11 3 3-11 11z" fill="rgba(255,255,255,0.38)"/><rect x="0" y="21" width="16" height="2" fill="rgba(255,255,255,0.38)"/></svg>
<svg style="left:780px;top:212px;" width="14" height="16" viewBox="0 0 14 16"><path d="M1 1h12v3M7 1v13" fill="none" stroke="rgba(255,255,255,0.38)" stroke-width="1.800"/></svg>
<svg style="left:817px;top:212px;" width="16" height="18" viewBox="0 0 16 18"><path d="M2 1h12v3M8 1v10M4 11h8M2 15h12" fill="none" stroke="rgba(255,255,255,0.38)" stroke-width="1.800"/></svg>
<svg style="left:857px;top:214px;" width="16" height="16" viewBox="0 0 16 16"><rect x="0" y="4" width="15" height="11" fill="rgba(255,255,255,0.38)"/><rect x="4" y="0" width="7" height="4" fill="rgba(255,255,255,0.38)"/></svg>
<svg style="left:900px;top:210px;" width="18" height="20" viewBox="0 0 18 20"><rect x="5" y="1" width="11" height="11" fill="none" stroke="rgba(255,255,255,0.38)" stroke-width="1" stroke-dasharray="1.500 1.200"/><rect x="0" y="8" width="5" height="9" fill="rgba(255,255,255,0.38)"/></svg>
<div style="left:933px;top:207px;width:1px;height:26px;background:rgba(255,255,255,0.3);"></div>
<svg style="left:950px;top:209px;" width="24" height="22" viewBox="0 0 24 22"><path d="M6 14v-12h9l5 5v4" fill="none" stroke="rgba(255,255,255,0.38)" stroke-width="1.600"/><rect x="2" y="5" width="9" height="8" rx="2" fill="rgba(255,255,255,0.38)"/><path d="M12 19l8-8 3 3-8 8h-3z" fill="rgba(255,255,255,0.38)"/></svg>
<svg style="left:408px;top:733px;" width="24" height="24" viewBox="0 0 24 24"><defs><linearGradient id="wg" x1="0" y1="0" x2="1" y2="1"><stop offset="0" stop-color="#6fd2ff"/><stop offset="1" stop-color="#0c8de4"/></linearGradient></defs><rect x="0" y="0" width="11.200" height="11.200" fill="url(#wg)"/><rect x="12.300" y="0" width="11.200" height="11.200" fill="url(#wg)"/><rect x="0" y="12.300" width="11.200" height="11.200" fill="url(#wg)"/><rect x="12.300" y="12.300" width="11.200" height="11.200" fill="url(#wg)"/></svg>
<svg style="left:452px;top:733px;" width="25" height="22" viewBox="0 0 25 22"><defs><linearGradient id="tv" x1="0" y1="0" x2="0" y2="1"><stop offset="0" stop-color="#fafafa"/><stop offset="1" stop-color="#c4c4c4"/></linearGradient></defs><rect x="0" y="6" width="18" height="15.500" rx="1.500" fill="#6b6b6b"/><rect x="6" y="0" width="18.500" height="16" rx="1.500" fill="url(#tv)"/><rect x="6" y="6" width="12" height="10" fill="#a8a8a8" opacity=".55"/></svg>
<svg style="left:496px;top:733px;" width="25" height="22" viewBox="0 0 25 22"><path d="M0 2.500a1.500 1.500 0 0 1 1.500-1.500h6.500l2.500 2.500h12.500a1.500 1.500 0 0 1 1.500 1.500v15.500a1 1 0 0 1-1 1h-22.500a1 1 0 0 1-1-1z" fill="#f0b21c"/><path d="M0 6h24.500v14.500a1 1 0 0 1-1 1h-22.500a1 1 0 0 1-1-1z" fill="#ffd04f"/><path d="M5 21.500v-5a2 2 0 0 1 2-2h10.500a2 2 0 0 1 2 2v5z" fill="#1583d8"/><rect x="8" y="16.500" width="8.500" height="1.300" fill="#0c5fa8"/></svg>
<svg style="left:539px;top:732px;" width="32" height="26" viewBox="0 0 32 26"><circle cx="12.700" cy="12.500" r="12" fill="#e94235"/><path d="M12.700 12.500l-10.400-6a12 12 0 0 0 4.400 16.400z" fill="#2fa24f"/><path d="M12.700 12.500l-6 10.400a12 12 0 0 0 16.400-4.400z" fill="#2fa24f"/><path d="M12.700 12.500h12a12 12 0 0 1-11 12l-5-3z" fill="#fbc116"/><path d="M2.300 6.500a12 12 0 0 1 20.800 0z" fill="#e94235"/><circle cx="12.700" cy="12.500" r="5.600" fill="#fff"/><circle cx="12.700" cy="12.500" r="4.400" fill="#3f85f3"/><circle cx="22.500" cy="3" r="7.600" fill="#f4f6f8"/><path d="M18.500 1.500c2-2 5-1.500 6.500.5M19 5c2 2 5 2 7-.5" fill="none" stroke="#9fd0e6" stroke-width="1.600"/><circle cx="24.500" cy="3.800" r="1.600" fill="#57b6dd"/></svg>
<svg style="left:584px;top:732px;" width="25" height="25" viewBox="0 0 25 25"><path d="M12 0.500a11.300 11.300 0 0 1 0 22.600c-2 0-3.900-.5-5.500-1.400l-5.800 1.800 1.900-5.500a11.300 11.300 0 0 1 9.400-17.500z" fill="#fff"/><path d="M12 2.300a9.500 9.500 0 0 1 0 19c-1.900 0-3.600-.5-5-1.400l-3.500 1.100 1.200-3.400a9.500 9.500 0 0 1 7.300-15.300z" fill="#27c45a"/><path d="M8.300 6.500c.6-.5 1.400-.3 1.700.4l.7 1.700c.2.500 0 1-.4 1.300l-.6.500c.8 1.700 2 2.900 3.700 3.700l.6-.7c.3-.4.800-.5 1.200-.3l1.800.8c.6.300.8 1.100.3 1.700-1 1.200-2.700 1.400-4.700.4-2.700-1.300-4.500-3.200-5.500-5.800-.6-1.500-.1-2.900 1.200-3.700z" fill="#fff"/></svg>
<svg style="left:628px;top:732px;" width="24" height="24" viewBox="0 0 24 24"><rect x="0" y="0" width="24" height="24" rx="1.500" fill="#1672d6"/><rect x="0" y="0" width="24" height="12" rx="1.500" fill="#1d84e6"/><circle cx="12" cy="12" r="10" fill="#fff"/><path d="M3.500 12l5.300-3.400v2.300h6.400v-2.300l5.300 3.400-5.300 3.400v-2.300h-6.400v2.300z" fill="#1672d6"/></svg>
<svg style="left:673px;top:733px;" width="24" height="22" viewBox="0 0 24 22"><path d="M7 0.500h9.500v6.500h5v6.500h-3.500v-3h-11z" fill="#49b36a"/><path d="M0.500 5h16.500a1 1 0 0 1 1 1v10.500a1 1 0 0 1-1 1h-12l-4.500 4.300z" fill="#119c3c"/><path d="M9 9h9v8.500h-9z" fill="#0a8a32"/><circle cx="20.300" cy="2" r="7.200" fill="#1d1f24"/></svg>
<span class="s" style="top:730px;font-size:12.5px;line-height:12.5px;color:#fff;left:693.3px;transform:translateX(-50%);">1</span>
<svg style="left:716px;top:732px;" width="24" height="24" viewBox="0 0 24 24"><rect x="0" y="0" width="24" height="24" fill="#ef443b"/><path d="M9.800 6.800l5.200 5.200-5.200 5.200-5.200-5.200z" fill="#fff"/><path d="M14 6.800l5.500 5.200-5.500 5.200-1.200-1.200 4.200-4-4.200-4z" fill="#fff"/></svg>
<svg style="left:760px;top:732px;" width="24" height="24" viewBox="0 0 24 24"><rect x="0" y="0" width="24" height="24" fill="#0ea6ea"/><rect x="4.500" y="6" width="15" height="9.500" rx="1" fill="none" stroke="#c4e9fa" stroke-width="1.100"/><path d="M10.300 15.800h3.400v1.800h-3.400zM8 18h8v1.300h-8z" fill="#c4e9fa"/></svg>
<svg style="left:804px;top:732px;" width="24" height="24" viewBox="0 0 24 24"><rect x="0" y="0" width="24" height="24" fill="#0ea6ea"/><rect x="4.500" y="6" width="15" height="9.500" rx="1" fill="none" stroke="#c4e9fa" stroke-width="1.100"/><path d="M10.300 15.800h3.400v1.800h-3.400zM8 18h8v1.300h-8z" fill="#c4e9fa"/></svg>
<svg style="left:847px;top:735px;" width="26" height="18" viewBox="0 0 26 18"><path d="M3 9c0-5 4-8.500 9.500-8.500s8.500 3 9 6.500l3.500.5-3.500 1c0 1.500-.5 3-1.500 4l2.500.5-3.500 1c-2 1.500-5 2.500-8.500 2.500-5 0-9.500-1.500-9.500-4.500 0-1 .8-2 2-3z" fill="#dcdad6"/><path d="M5 5.500c2-2.500 9-3.500 14-1-4-1-10-.5-14 1z" fill="#f6f1e4"/><path d="M4 12c4 2 11 2 16-.5-4 3.500-12 3.500-16 .5z" fill="#b9b7b3"/></svg>
<svg style="left:892px;top:733px;" width="25" height="24" viewBox="0 0 25 24"><path d="M11.500 1c6 0 10.500 3.500 10.500 8.500 0 2-1 3-2.500 3.500v8c-2.500 1.500-4.500 0-4.500-2 0-1.500-1-2.500-2.500-2l-3.500 5c-5-.5-9-5-9-10.500 0-6 5-10.500 11.500-10.500z" fill="#2b9ee0"/><path d="M2 16c2 4 5 6 7 6l3.500-5c-4 1-8 .5-10.500-1z" fill="#1b7fc2"/><circle cx="7" cy="5.500" r="2" fill="#3aa845"/><circle cx="12.500" cy="3.800" r="1.900" fill="#f2c21b"/><circle cx="4.300" cy="10.500" r="2" fill="#d2562c"/><path d="M11.500 10.500v3M10 12h3" stroke="#0c3f78" stroke-width="1"/><rect x="16.800" y="4" width="3.400" height="5" fill="#f1e2c4"/><rect x="17.300" y="9" width="2.400" height="13" fill="#b3701f"/></svg>
<div style="left:928px;top:724px;width:40px;height:40px;background:#2c2d30;border-radius:4px;border:1px solid #37383b;"></div>
<svg style="left:937px;top:733px;" width="22" height="21" viewBox="0 0 22 21"><rect x="0.500" y="0.500" width="21" height="20" rx="4" fill="#b30b00"/><path d="M5 15.500c2.200-1.500 4.300-5 5-9 .3-1.600 1.800-1.300 1.500.3-.5 2.700 1.300 6 4.500 7 1.300.4.800 1.700-.5 1.300-3-.8-6.600-.5-9.500 1.200-1 .6-1.600-.3-1-.8z" fill="none" stroke="#fff" stroke-width="1.300"/></svg>
<div style="left:940px;top:760px;width:16px;height:3px;background:#4cc2ff;border-radius:1.500px;"></div>
<div style="left:505px;top:760px;width:6px;height:3px;background:#8d8d8d;border-radius:1.500px;"></div>
<div style="left:549px;top:760px;width:6px;height:3px;background:#8d8d8d;border-radius:1.500px;"></div>
<div style="left:593px;top:760px;width:6px;height:3px;background:#8d8d8d;border-radius:1.500px;"></div>
<div style="left:637px;top:760px;width:6px;height:3px;background:#8d8d8d;border-radius:1.500px;"></div>
<div style="left:681px;top:760px;width:6px;height:3px;background:#8d8d8d;border-radius:1.500px;"></div>
<div style="left:769px;top:760px;width:6px;height:3px;background:#8d8d8d;border-radius:1.500px;"></div>
<div style="left:813px;top:760px;width:6px;height:3px;background:#8d8d8d;border-radius:1.500px;"></div>
<div style="left:857px;top:760px;width:6px;height:3px;background:#8d8d8d;border-radius:1.500px;"></div>
<div style="left:901px;top:760px;width:6px;height:3px;background:#8d8d8d;border-radius:1.500px;"></div>
<svg style="left:1115px;top:740px;" width="13" height="8" viewBox="0 0 13 8"><path d="M1 6.800l5.200-5.200 5.200 5.200" fill="none" stroke="#fff" stroke-width="1.300"/></svg>
<svg style="left:1136px;top:735px;" width="18" height="18" viewBox="0 0 18 18"><path d="M1.500 8.500a6.700 6.700 0 0 1 12.300-3.400M14.300 1.300v4.200h-4.200" fill="none" stroke="#fff" stroke-width="1.200"/><path d="M2.500 11.500a6.700 6.700 0 0 0 5.500 4.300M2 15.300v-4.200h4.200" fill="none" stroke="#fff" stroke-width="1.200"/><circle cx="12.500" cy="12.800" r="4.200" fill="#f7990c"/></svg>
<svg style="left:1208px;top:737px;" width="18" height="13" viewBox="0 0 18 13"><path d="M1 4.800a11.500 11.500 0 0 1 16 0M3.500 7.500a8 8 0 0 1 11 0M6 10a4.300 4.300 0 0 1 6 0" fill="none" stroke="#fff" stroke-width="1.300"/><circle cx="9" cy="11.600" r="1.200" fill="#fff"/></svg>
<svg style="left:1232px;top:738px;" width="17" height="12" viewBox="0 0 17 12"><path d="M1 4h2.800l3.700-3.300v10.600l-3.700-3.300h-2.800z" fill="none" stroke="#fff" stroke-width="1.100" stroke-linejoin="round"/><path d="M10.500 3.500l5 5M15.500 3.500l-5 5" stroke="#fff" stroke-width="1.100"/></svg>
<svg style="left:1256px;top:737px;" width="18" height="13" viewBox="0 0 18 13"><rect x="5" y="3.500" width="10.500" height="8" rx="1.500" fill="none" stroke="#fff" stroke-width="1.200"/><rect x="6.800" y="5.300" width="6.900" height="4.400" fill="#fff"/><rect x="16" y="6" width="1.300" height="3" fill="#fff"/><path d="M2 0.500v2.500M4.500 0.500v2.500M0.800 3h5v2a2.500 2.500 0 0 1-2 2.400v3.600h-1v-3.600a2.500 2.500 0 0 1-2-2.400z" fill="#fff" stroke="#fff" stroke-width=".6"/></svg>
</div></body></html>
